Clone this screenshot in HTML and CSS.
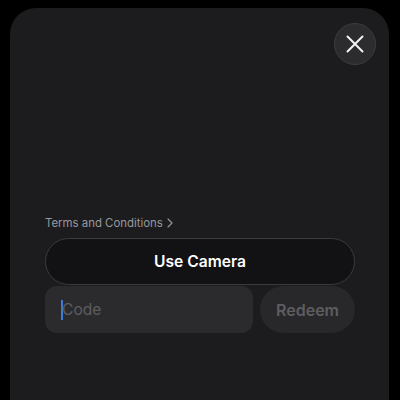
FILE: index.html
```html
<!DOCTYPE html>
<html>
<head>
<meta charset="utf-8">
<link rel="stylesheet" href="styles.css">
</head>
<body>
<div class="sheet">
  <button class="close" aria-label="Close">
    <svg width="20" height="20" viewBox="0 0 20 20"><path d="M2.5 2.5 L17.5 17.5 M17.5 2.5 L2.5 17.5" stroke="#f2f2f2" stroke-width="2" stroke-linecap="round"/></svg>
  </button>
  <div class="content">
    <div class="terms">Terms and Conditions <svg class="chev" width="6" height="10" viewBox="0 0 6 10"><path d="M1 1 L5 5 L1 9" fill="none" stroke="#98989d" stroke-width="1.1" stroke-linecap="round" stroke-linejoin="round"/></svg></div>
    <button class="camera">Use Camera</button>
    <div class="row">
      <div class="code"><span class="caret"></span><span class="ph">Code</span></div>
      <button class="redeem">Redeem</button>
    </div>
  </div>
</div>
</body>
</html>
```
FILE: styles.css
```css
html, body {
  margin: 0;
  padding: 0;
  background: #000;
  width: 400px;
  height: 400px;
  overflow: hidden;
  font-family: Inter, "Noto Sans", sans-serif;
}
.sheet {
  position: relative;
  margin: 8px 0 0 10px;
  width: 379px;
  height: 392px;
  background: #1c1c1e;
  border-radius: 26px 26px 0 0;
  box-sizing: border-box;
  padding: 208px 34px 0 35px;
}
.close {
  position: absolute;
  top: 15px;
  right: 13px;
  width: 42px;
  height: 42px;
  border-radius: 50%;
  background: #2c2c2e;
  border: 1px solid #3c3c3e;
  box-sizing: border-box;
  display: flex;
  align-items: center;
  justify-content: center;
  padding: 0;
}
.content {
  display: flex;
  flex-direction: column;
}
.terms {
  display: flex;
  align-items: center;
  font-size: 11.4px;
  line-height: 14px;
  color: #98989d;
  margin-bottom: 8px;
}
.chev {
  margin-left: 4px;
}
.camera {
  height: 47px;
  border-radius: 24px;
  background: #121214;
  border: 1px solid #3a3a3c;
  color: #fff;
  font-family: Inter, sans-serif;
  font-weight: 600;
  font-size: 15.6px;
  margin-bottom: 1px;
  padding: 0;
}
.row {
  display: flex;
  gap: 7px;
}
.code {
  width: 208px;
  height: 47px;
  border-radius: 12px;
  background: #2b2b2d;
  display: flex;
  align-items: center;
  padding-left: 16px;
  box-sizing: border-box;
}
.caret {
  width: 2px;
  height: 20px;
  background: #3d7bd8;
  margin-right: -1px;
}
.ph {
  color: #5d5d61;
  font-size: 15.6px;
}
.redeem {
  width: 95px;
  height: 47px;
  border-radius: 24px;
  background: #28282a;
  border: none;
  color: #5d5d60;
  font-family: Inter, sans-serif;
  font-weight: 600;
  font-size: 16px;
  padding: 0;
}
```
